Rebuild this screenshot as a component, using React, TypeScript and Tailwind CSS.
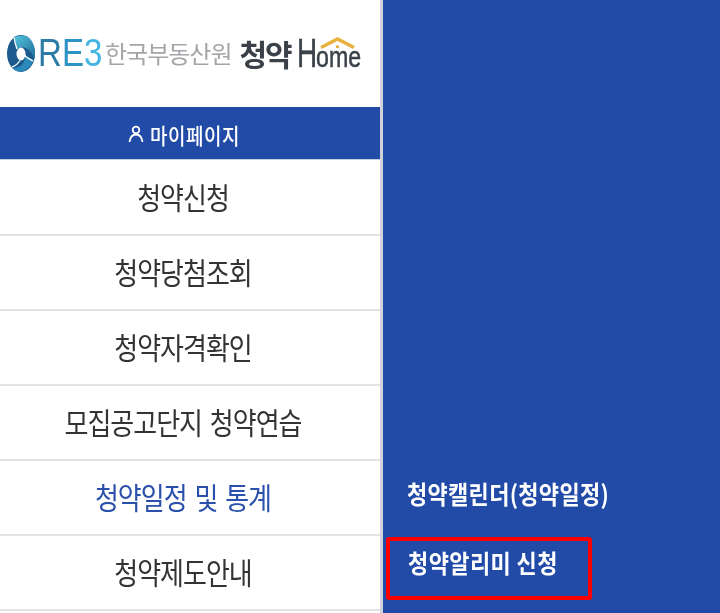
const FONT = "font-['Noto_Sans_CJK_KR','Noto_Sans',sans-serif]";

const menuItems = [
  { label: "청약신청" },
  { label: "청약당첨조회" },
  { label: "청약자격확인" },
  { label: "모집공고단지 청약연습" },
  { label: "청약일정 및 통계", active: true },
  { label: "청약제도안내" },
];

const RebMark = () => (
  <svg width="28" height="37" viewBox="0 0 28 37" className="shrink-0">
    <defs>
      <linearGradient id="swirlA" x1="0" y1="0" x2="1" y2="1">
        <stop offset="0" stopColor="#55c6dd" />
        <stop offset="1" stopColor="#1d6a9c" />
      </linearGradient>
    </defs>
    <ellipse cx="14" cy="18.500" rx="14" ry="18.500" fill="#1c5a8e" />
    <path d="M7 2.500C12-.5 20-.5 24 5c3 4 4 9 4 13.500 0 2-.3 4-1 6-1-6-5-11-10-12-3-.5-5 0-7 2C9 10 8 6 7 2.500z" fill="url(#swirlA)" />
    <path d="M26 26c-2 6-7 10-12 10.500-4 .3-7-1-9-4 5 1 10-1 12-6 1-2 1-4 1-6 3 1 6 3 8 5.500z" fill="#2b8ab9" />
    <ellipse cx="14" cy="19" rx="4.500" ry="6.500" fill="#fff" />
    <path d="M10 14C8.500 10 7.500 6 7 2.500M18 20c1 3 5 4 8 6M13 25.500c-2 3-5 5.500-8 6.500" fill="none" stroke="#fff" strokeWidth="1.300" />
  </svg>
);

const HomeRoof = () => (
  <svg width="35" height="12" viewBox="0 0 35 12" className="absolute left-[23px] top-[4px]">
    <path d="M1 10.500 17.500 2 34 10.500" fill="none" stroke="#e8b03c" strokeWidth="3.400" />
    <rect x="16" y="8.500" width="3" height="2.500" fill="#e8b03c" />
  </svg>
);

const Logo = () => (
  <div className="h-[107px] flex items-center pl-[7px] pb-[1px] bg-white">
    <RebMark />
    <span className="ml-[3px] w-[66px] shrink-0 inline-block origin-left scale-x-[0.87] font-['Liberation_Sans',sans-serif] text-[38px] leading-none text-[#2c93c4]">
      <span className="text-[#2b7ba6]">R</span>E<span className="text-[#41b6e3]">3</span>
    </span>
    <span className={`${FONT} ml-[1px] text-[24px] leading-none tracking-[-1px] text-[#a3a5a8] whitespace-nowrap`}>
      한국부동산원
    </span>
    <span className={`${FONT} ml-[8px] text-[30px] leading-none font-bold tracking-[-2px] text-[#3a4149] whitespace-nowrap`}>
      청약
    </span>
    <span className="relative ml-[6px] flex items-baseline font-['Liberation_Sans',sans-serif] leading-none text-[#3a4149] [-webkit-text-stroke:0.5px]">
      <span className="w-[19px] inline-block origin-left scale-x-[0.68] text-[41px]">H</span>
      <span className="w-[45px] inline-block origin-left scale-x-[0.8] text-[29px]">ome</span>
      <HomeRoof />
    </span>
  </div>
);

const App = () => {
  return (
    <div className={`${FONT} w-[720px] h-[613px] overflow-hidden flex bg-[#224ba8] blur-[0.4px]`}>
      <div className="w-[383px] h-full bg-white border-r-[3px] border-[#cfd2d8] shrink-0">
        <Logo />
        <div className="h-[53px] pt-[2px] pr-[12px] flex items-center justify-center gap-[6px] bg-[#224ba8] text-white border-b border-[#c5cfe6]">
          <svg width="16" height="18" viewBox="0 0 16 18" fill="none" stroke="#fff" strokeWidth="1.800">
            <circle cx="8" cy="5" r="3.300" />
            <path d="M1.500 17c.6-4.500 3-7.500 6.500-7.500s5.900 3 6.500 7.500" />
          </svg>
          <span className="inline-block scale-y-[1.15] text-[19px] font-medium tracking-[0.5px] leading-none">마이페이지</span>
        </div>
        <ul className="mt-[1px]">
          {menuItems.map((item) => (
            <li
              key={item.label}
              className={`h-[75px] pr-[14px] pb-[5px] flex items-center justify-center border-b-2 border-[#e2e2e2] text-[26px] tracking-[-1px] [word-spacing:3px] whitespace-nowrap ${
                item.active ? "text-[#2a50ab]" : "text-[#333333]"
              }`}
            >
              <span className="inline-block scale-y-[1.14]">{item.label}</span>
            </li>
          ))}
        </ul>
      </div>
      <div className="flex-1 flex flex-col justify-end pb-[13px] pl-[3px] text-white text-[22px] font-bold">
        <a className="h-[60px] mb-[12px] pl-[21px] flex items-center pb-[3px]">
          <span className="inline-block scale-y-[1.14] tracking-[0.3px] whitespace-nowrap">청약캘린더(청약일정)</span>
        </a>
        <a className="w-[206px] h-[63px] pl-[18px] pb-[12px] flex items-center border-[4px] border-[#ff0000] rounded-[3px]">
          <span className="inline-block scale-y-[1.14] tracking-[0.4px] whitespace-nowrap">청약알리미 신청</span>
        </a>
      </div>
    </div>
  );
};

export default App;
